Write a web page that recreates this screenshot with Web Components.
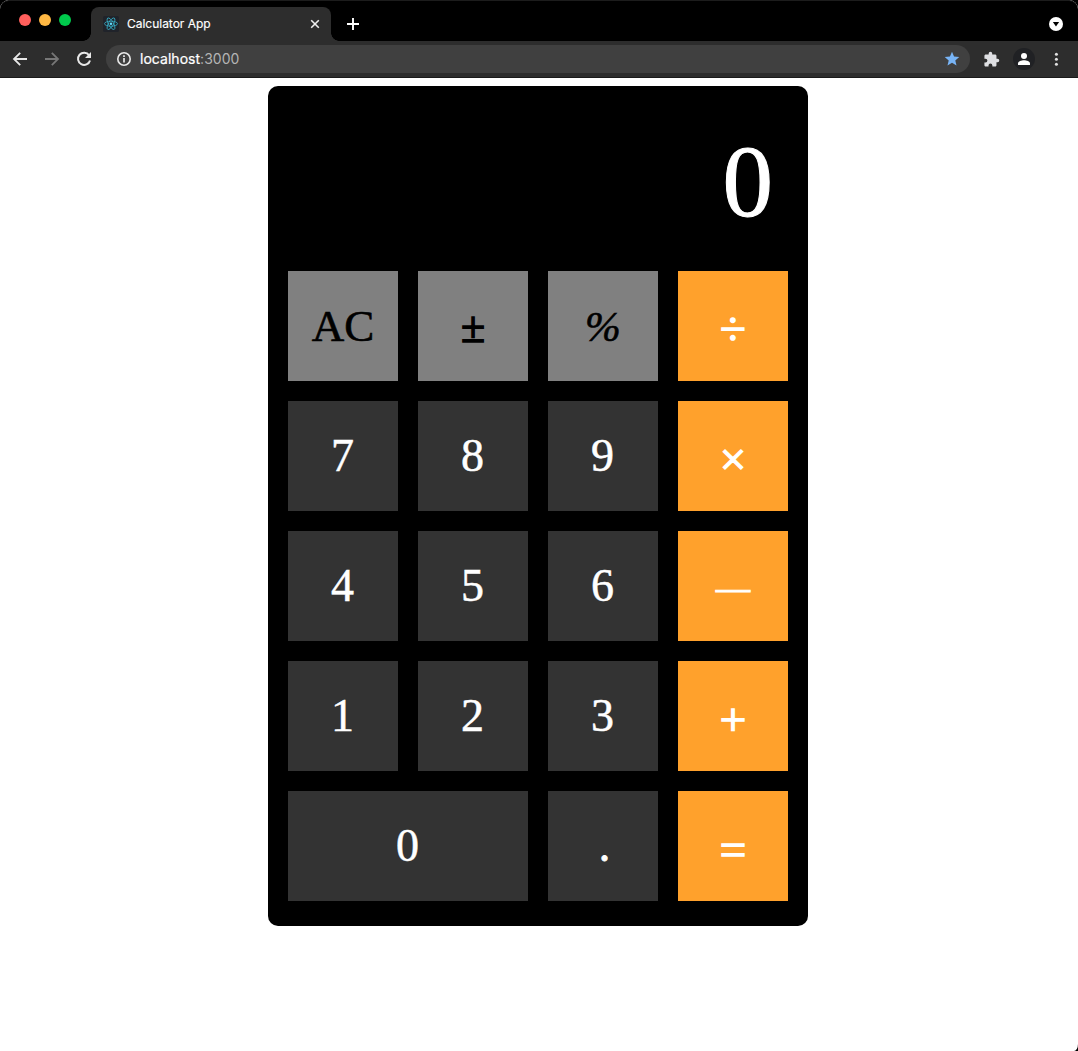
<!DOCTYPE html>
<html lang="en">
<head>
<meta charset="utf-8">
<title>Calculator App</title>
<style>
html{background:#000}
body{margin:0;height:1051px;overflow:hidden}
</style>
</head>
<body>
<browser-window>
  <browser-tab slot="tab">Calculator App</browser-tab>
  <browser-toolbar slot="toolbar"><span slot="host">localhost</span><span slot="port">:3000</span></browser-toolbar>
  <calc-app></calc-app>
</browser-window>
<script>
function define(name, html) {
  const t = document.createElement('template');
  t.innerHTML = html;
  customElements.define(name, class extends HTMLElement {
    constructor() {
      super();
      this.attachShadow({ mode: 'open' }).append(t.content.cloneNode(true));
    }
  });
}

define('browser-window', `
<style>
:host{display:flex;flex-direction:column;width:1078px;height:1051px;box-sizing:border-box;background:#fff;border-radius:9px 9px 4px 0 / 9px 9px 7px 0;overflow:hidden}
.strip{height:41px;background:#000;display:flex;align-items:flex-end;box-sizing:border-box;flex:none;border-radius:9px 9px 0 0;box-shadow:inset 0 1px 0 #1c1c1c}
.lights{display:flex;gap:8px;padding:0 12px 15px 19px;width:52px}
.lights i{width:12px;height:12px;border-radius:50%;background:#ff5f5c}
.lights i:nth-child(2){background:#ffb843}
.lights i:nth-child(3){background:#00ca4c}
.plus{margin:0 0 11px 8px;width:12px;height:12px;padding:0;display:block}
.menu{margin:0 15px 10px auto;display:block}
main{flex:1;display:flex;justify-content:center;padding:8px 2px 0 0;align-items:flex-start}
</style>
<header class="strip">
  <div class="lights"><i></i><i></i><i></i></div>
  <slot name="tab"></slot>
  <svg class="plus" viewBox="0 0 12 12"><path d="M6 0v12M0 6h12" stroke="#fff" stroke-width="1.9"/></svg>
  <svg class="menu" width="14" height="14" viewBox="0 0 14 14"><circle cx="7" cy="7" r="7" fill="#fff"/><path d="M3.900 5.100h6.200L7 9.500z" fill="#000"/></svg>
</header>
<slot name="toolbar"></slot>
<main><slot></slot></main>`);

define('browser-tab', `
<style>
:host{display:flex;align-items:center;width:256px;height:34px;box-sizing:border-box;padding:0 20px;font:12px/16px Inter,"Liberation Sans",sans-serif;letter-spacing:-.02px;color:#fff;
background:radial-gradient(circle at 0 0,transparent 7.5px,#2d2d2d 8px) 0 100%/8px 8px no-repeat,radial-gradient(circle at 100% 0,transparent 7.5px,#2d2d2d 8px) 100% 100%/8px 8px no-repeat}
.body{display:flex;align-items:center;flex:none;width:240px;height:34px;box-sizing:border-box;margin:0 -12px;padding:0 11px 0 12px;background:#2d2d2d;border-radius:8px 8px 0 0}
.react{margin-right:8px;flex:none}
.label{flex:1;white-space:nowrap;-webkit-text-stroke:.15px #fff}
</style>
<div class="body">
<svg class="react" width="16" height="16" viewBox="0 0 16 16"><rect width="16" height="16" rx="1.5" fill="#20232a"/><g fill="none" stroke="#37a9c1" stroke-width=".85"><ellipse cx="8" cy="7.700" rx="6.500" ry="2.500"/><ellipse cx="8" cy="7.700" rx="6.500" ry="2.500" transform="rotate(60 8 7.700)"/><ellipse cx="8" cy="7.700" rx="6.500" ry="2.500" transform="rotate(120 8 7.700)"/></g><circle cx="8" cy="7.700" r="1.300" fill="#61dafb"/></svg>
<span class="label"><slot></slot></span>
<svg width="10" height="10" viewBox="0 0 10 10"><path d="M1.200 1.200l7.600 7.600M8.800 1.200L1.200 8.800" stroke="#eee" stroke-width="1.600"/></svg>
</div>`);

define('browser-toolbar', `
<style>
:host{display:flex;align-items:center;height:37px;box-sizing:border-box;flex:none;background:#2d2d2d;border-bottom:1px solid #1a1a1a;padding:0 13px 0 12px;font:14px/18px Inter,"Liberation Sans",sans-serif}
svg{display:block;flex:none}
.nav{display:flex;gap:16px;margin-right:14px}
.address{display:flex;align-items:center;width:864px;height:28px;box-sizing:border-box;border-radius:14px;background:#404040;padding:0 10px 0 10px;letter-spacing:.03px;color:#fff}
.address .info{margin-right:8px}
.host{-webkit-text-stroke:.2px #fff}
.port{color:#b4b4b4;flex:1}
.right{display:flex;align-items:center;margin-left:13px}
</style>
<div class="nav">
<svg width="16" height="16" viewBox="0 0 16 16"><path d="M15 8H2.200M8.200 1.800L2 8l6.200 6.200" fill="none" stroke="#e8e8e8" stroke-width="1.800"/></svg>
<svg width="16" height="16" viewBox="0 0 16 16"><path d="M1 8h12.800M7.800 1.800L14 8l-6.200 6.200" fill="none" stroke="#777" stroke-width="1.800"/></svg>
<svg width="16" height="16" viewBox="0 0 16 16"><path d="M13.100 4.300A6.100 6.100 0 1 0 14 9.400" fill="none" stroke="#e8e8e8" stroke-width="2"/><path d="M15 1v6H9z" fill="#e8e8e8"/></svg>
</div>
<div class="address">
<svg class="info" width="16" height="16" viewBox="0 0 16 16"><circle cx="8" cy="8" r="6.200" fill="none" stroke="#e8e8e8" stroke-width="1.600"/><path d="M8 7v4.400M8 4.300v1.600" stroke="#e8e8e8" stroke-width="1.700"/></svg>
<span class="host"><slot name="host"></slot></span><span class="port"><slot name="port"></slot></span>
<svg width="16" height="16" viewBox="0 0 16 16"><path d="M8 .8l2.050 4.800 5.200.45-3.950 3.400 1.200 5.100L8 11.850l-4.500 2.700 1.200-5.100L.75 6.050l5.200-.45z" fill="#78b4f6"/></svg>
</div>
<div class="right">
<svg width="17" height="17" viewBox="0 0 24 24"><path d="M20.500 11H19V7c0-1.100-.9-2-2-2h-4V3.500a2.500 2.500 0 0 0-5 0V5H4c-1.100 0-1.990.9-1.990 2v3.800H3.500a2.700 2.700 0 0 1 0 5.400H2V20c0 1.100.9 2 2 2h3.800v-1.500a2.700 2.700 0 0 1 5.400 0V22H17c1.100 0 2-.9 2-2v-4h1.500a2.500 2.500 0 0 0 0-5z" fill="#dedfe2"/></svg>
<svg style="margin-left:13px" width="22" height="22" viewBox="0 0 22 22"><circle cx="11" cy="11" r="11" fill="#202124"/><circle cx="11" cy="8" r="3" fill="#fff"/><path d="M5 17v-1.500C5 13.300 8.500 12.300 11 12.300s6 1 6 3.200V17z" fill="#fff"/></svg>
<svg style="margin-left:13px" width="16" height="16" viewBox="0 0 16 16" fill="#e0e0e0"><circle cx="8.400" cy="3.300" r="1.500"/><circle cx="8.400" cy="8.300" r="1.500"/><circle cx="8.400" cy="13.300" r="1.500"/></svg>
</div>`);

define('calc-display', `
<style>
:host{display:flex;justify-content:flex-end;height:185px;box-sizing:border-box;padding:39px 15px 0 0;color:#fff;font-size:101px;line-height:115px;-webkit-text-stroke:1px #fff}
</style><slot></slot>`);

define('calc-key', `
<style>
:host{display:flex;align-items:center;justify-content:center;height:110px;box-sizing:border-box;background:#333;color:#fff;font-size:46px;line-height:52px;padding-right:1px;-webkit-text-stroke:.5px currentColor}
:host([kind=fn]){background:#808080;color:#000;font-size:45px;padding-right:0;-webkit-text-stroke-width:.6px}
:host([kind=op]){background:#ffa12c;font-size:47px;padding:6px 0 0;-webkit-text-stroke-width:1.5px}
:host([wide]){grid-column:span 2}
:host([kind=fn][sign]){padding-top:3px;font-size:44px;-webkit-text-stroke-width:1.4px}
:host([kind=fn][percent]){font-style:italic;font-size:43px;padding-top:2px}
:host([point]){padding:0 0 0 3px;-webkit-text-stroke-width:.8px}
:host([kind=op][dash]){font-size:34px;padding-top:3px;-webkit-text-stroke-width:1.1px}
</style><slot></slot>`);

define('calc-app', `
<style>
:host{display:block;width:540px;height:840px;box-sizing:border-box;padding:0 20px;background:#000;border-radius:10px;font-family:"Liberation Serif","Times New Roman",serif}
.keys{display:grid;grid-template-columns:repeat(4,110px);gap:20px}
</style>
<calc-display>0</calc-display>
<div class="keys">
<calc-key kind="fn">AC</calc-key><calc-key kind="fn" sign>±</calc-key><calc-key kind="fn" percent>%</calc-key><calc-key kind="op">÷</calc-key>
<calc-key>7</calc-key><calc-key>8</calc-key><calc-key>9</calc-key><calc-key kind="op">×</calc-key>
<calc-key>4</calc-key><calc-key>5</calc-key><calc-key>6</calc-key><calc-key kind="op" dash>—</calc-key>
<calc-key>1</calc-key><calc-key>2</calc-key><calc-key>3</calc-key><calc-key kind="op">+</calc-key>
<calc-key wide>0</calc-key><calc-key point>.</calc-key><calc-key kind="op">=</calc-key>
</div>`);
</script>
</body>
</html>
